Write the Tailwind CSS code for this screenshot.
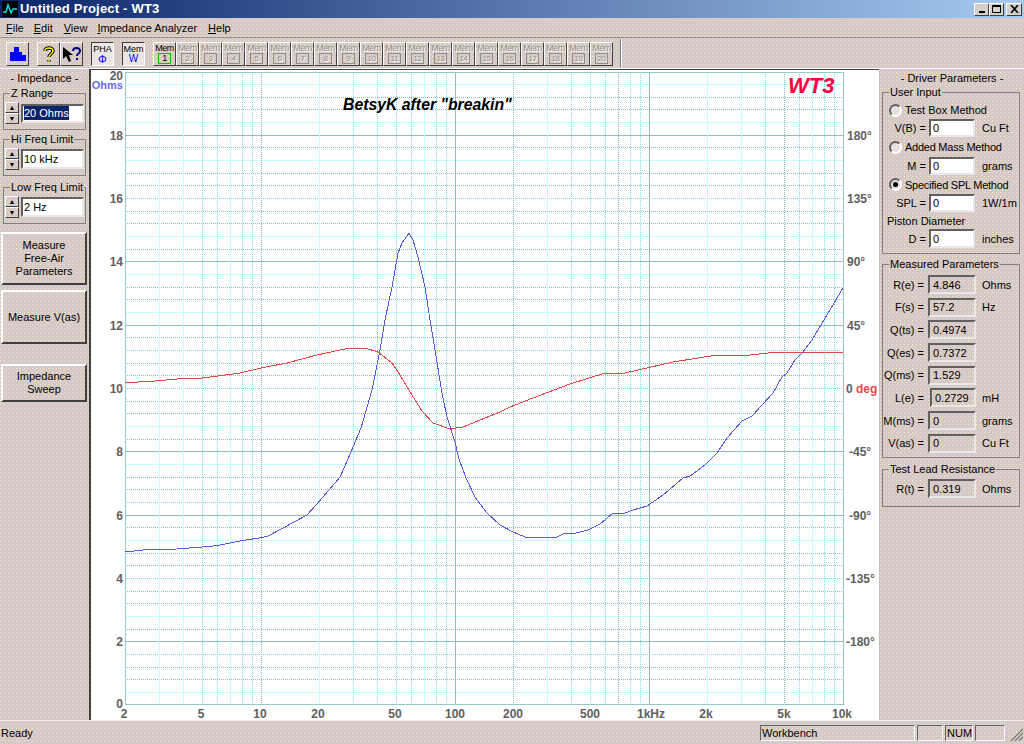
<!DOCTYPE html>
<html lang="en">

<head>
    <meta charset="UTF-8">
    <title>Untitled Project - WT3</title>
    <script src="https://cdn.jsdelivr.net/npm/@tailwindcss/browser@4"></script>
</head>

<body class="overflow-hidden">
    <div class="w-[1024px] h-[744px] flex flex-col overflow-hidden font-['Liberation_Sans',sans-serif] text-[11px] leading-[14px] text-black bg-[#d6c8c8] bg-[image:conic-gradient(from_0deg_at_1px_1px,transparent_75%,#f2f0ac_75%),conic-gradient(from_0deg_at_1px_1px,transparent_75%,#dcdcd4_75%)] bg-[length:4px_4px] bg-[position:0_0,2px_2px]">

        <!-- title bar -->
        <div class="h-[18px] flex items-center bg-[linear-gradient(90deg,#0a246a,#a6caf0)]">
            <svg class="ml-[2px] w-[16px] h-[16px]" viewBox="0 0 16 16">
                <rect width="16" height="16" fill="#000" />
                <path d="M1 11 L4 11 L6 4 L9 12 L11 8 L15 8" fill="none" stroke="#00e0e0" stroke-width="1.5" />
            </svg>
            <span class="ml-[2px] text-white font-bold text-[13px] tracking-[0.2px]">Untitled Project - WT3</span>
            <div class="ml-auto mr-[2px] flex">
                <div class="w-[15px] h-[13px] flex items-end justify-center pb-[2px] border border-t-white border-l-white border-r-[#404040] border-b-[#404040] bg-[#d4d0c8]">
                    <div class="w-[6px] h-[2px] bg-black"></div>
                </div>
                <div class="w-[15px] h-[13px] flex items-center justify-center border border-t-white border-l-white border-r-[#404040] border-b-[#404040] bg-[#d4d0c8]">
                    <div class="w-[9px] h-[8px] border border-black border-t-2"></div>
                </div>
                <div class="ml-[2px] w-[16px] h-[13px] flex items-center justify-center border border-t-white border-l-white border-r-[#404040] border-b-[#404040] bg-[#d4d0c8]">
                    <svg class="w-[9px] h-[8px]" viewBox="0 0 9 8"><path d="M1 0 L8 8 M8 0 L1 8" stroke="#000" stroke-width="1.6" /></svg>
                </div>
            </div>
        </div>

        <!-- menu -->
        <div class="h-[19px] flex items-center text-[11px]">
            <span class="ml-[6px]"><u>F</u>ile</span>
            <span class="ml-[10px]"><u>E</u>dit</span>
            <span class="ml-[11px]"><u>V</u>iew</span>
            <span class="ml-[10px]"><u>I</u>mpedance Analyzer</span>
            <span class="ml-[11px]"><u>H</u>elp</span>
        </div>

        <!-- toolbar -->
        <div class="h-[32px] flex items-start pt-[4px] border-t border-t-[#909090] border-b border-b-white">
            <div class="ml-[6px] w-[23px] h-[24px] flex items-center justify-center border border-t-white border-l-white border-r-[#404040] border-b-[#404040]">
                <svg class="w-[16px] h-[14px]" viewBox="0 0 16 14"><path d="M0 14 V5 H4 V0 H9 V5 H12 V8 H16 V14 Z" fill="#0000ff" /></svg>
            </div>
            <div class="ml-[8px] w-[23px] h-[24px] flex items-center justify-center border border-t-white border-l-white border-r-[#404040] border-b-[#404040]">
                <svg class="w-[12px] h-[17px]" viewBox="0 0 12 17">
                    <path d="M2 5 C2 1 10 1 10 5 C10 8 6 8 6 11 M6 14 V15.5" fill="none" stroke="#000" stroke-width="3.4" />
                    <path d="M2 5 C2 1 10 1 10 5 C10 8 6 8 6 11 M6 14 V15.5" fill="none" stroke="#ffff00" stroke-width="1.4" />
                </svg>
            </div>
            <div class="w-[23px] h-[24px] flex items-center justify-center border border-t-white border-l-white border-r-[#404040] border-b-[#404040]">
                <svg class="w-[20px] h-[17px]" viewBox="0 0 20 17">
                    <path d="M1 1 L1 13 L4 10 L7 16 L9 15 L7 9 L11 9 Z" fill="#000" />
                    <path d="M11 5 C11 1 18 1 18 5 C18 8 15 7 15 10 M15 12 V14" fill="none" stroke="#000080" stroke-width="2" />
                </svg>
            </div>
            <div class="ml-[8px] w-[23px] h-[24px] flex flex-col items-center border border-t-[#404040] border-l-[#404040] border-r-white border-b-white bg-white/50 text-[9px] leading-[10px] pt-[1px]">
                <span>PHA</span><span class="text-[#0000ff] text-[11px] leading-[10px]">Φ</span>
            </div>
            <div class="ml-[8px] w-[23px] h-[24px] flex flex-col items-center border border-t-[#404040] border-l-[#404040] border-r-white border-b-white bg-white/50 text-[9px] leading-[10px] pt-[1px]">
                <span>Mem</span><span class="text-[#0000ff] text-[10px] leading-[10px]">W</span>
            </div>
            <div id="mems" class="ml-[8px] flex"></div>
            <div class="ml-[7px] w-[2px] h-[28px] -mt-[3px] border-l border-l-[#808080] border-r border-r-white"></div>
        </div>

        <div class="flex flex-1 min-h-0">
            <!-- left panel -->
            <div class="w-[91px] flex flex-col border-r-2 border-r-[#404040]">
                <div class="h-[17px] flex items-center justify-center">- Impedance -</div>
                <fieldset class="ml-[3px] w-[83px] h-[43px] mt-[1px] border border-[#808080]">
                    <legend class="ml-[6px] px-[1px] leading-[13px]">Z Range</legend>
                    <div class="flex items-center gap-[2px] pl-[1px] pt-[2px]">
                        <div class="w-[14px] flex flex-col">
                            <div class="h-[11px] flex items-center justify-center text-[7px] leading-none border border-t-white border-l-white border-b-[#404040] border-r-[#404040]">▲</div>
                            <div class="h-[11px] flex items-center justify-center text-[7px] leading-none border border-t-white border-l-white border-b-[#404040] border-r-[#404040]">▼</div>
                        </div>
                        <div class="w-[63px] h-[19px] flex items-center bg-white border-2 border-t-[#606060] border-l-[#606060] border-r-[#e8e8e8] border-b-[#e8e8e8] pl-[1px]"><span class="bg-[#0a246a] text-white">20 Ohms</span></div>
                    </div>
                </fieldset>
                <fieldset class="ml-[3px] w-[83px] h-[43px] mt-[3px] border border-[#808080]">
                    <legend class="ml-[6px] px-[1px] leading-[13px]">Hi Freq Limit</legend>
                    <div class="flex items-center gap-[2px] pl-[1px] pt-[2px]">
                        <div class="w-[14px] flex flex-col">
                            <div class="h-[11px] flex items-center justify-center text-[7px] leading-none border border-t-white border-l-white border-b-[#404040] border-r-[#404040]">▲</div>
                            <div class="h-[11px] flex items-center justify-center text-[7px] leading-none border border-t-white border-l-white border-b-[#404040] border-r-[#404040]">▼</div>
                        </div>
                        <div class="w-[63px] h-[20px] flex items-center bg-white border-2 border-t-[#606060] border-l-[#606060] border-r-[#e8e8e8] border-b-[#e8e8e8] pl-[1px]">10 kHz</div>
                    </div>
                </fieldset>
                <fieldset class="ml-[3px] w-[83px] h-[43px] mt-[5px] border border-[#808080]">
                    <legend class="ml-[6px] px-[1px] leading-[13px]">Low Freq Limit</legend>
                    <div class="flex items-center gap-[2px] pl-[1px] pt-[2px]">
                        <div class="w-[14px] flex flex-col">
                            <div class="h-[11px] flex items-center justify-center text-[7px] leading-none border border-t-white border-l-white border-b-[#404040] border-r-[#404040]">▲</div>
                            <div class="h-[11px] flex items-center justify-center text-[7px] leading-none border border-t-white border-l-white border-b-[#404040] border-r-[#404040]">▼</div>
                        </div>
                        <div class="w-[63px] h-[20px] flex items-center bg-white border-2 border-t-[#606060] border-l-[#606060] border-r-[#e8e8e8] border-b-[#e8e8e8] pl-[1px]">2 Hz</div>
                    </div>
                </fieldset>
                <div class="mt-[8px] ml-[1px] w-[86px] h-[53px] flex items-center justify-center text-center border-2 border-t-white border-l-white border-r-[#404040] border-b-[#404040] leading-[13px]">Measure<br>Free-Air<br>Parameters</div>
                <div class="mt-[5px] ml-[1px] w-[86px] h-[54px] flex items-center justify-center text-center border-2 border-t-white border-l-white border-r-[#404040] border-b-[#404040]">Measure V(as)</div>
                <div class="mt-[20px] ml-[1px] w-[86px] h-[38px] flex items-center justify-center text-center border-2 border-t-white border-l-white border-r-[#404040] border-b-[#404040] leading-[13px]">Impedance<br>Sweep</div>
            </div>

            <!-- chart -->
            <svg class="w-[789px] h-[651px] shrink-0 bg-white" viewBox="91 69 789 651" font-family="Liberation Sans" font-size="12" font-weight="bold" fill="#606060">
                <g id="grid" shape-rendering="crispEdges"></g>
                <line x1="91" y1="69.5" x2="880" y2="69.5" stroke="#404040" shape-rendering="crispEdges" />
                <line x1="879.5" y1="69" x2="879.5" y2="720" stroke="#c0c0c0" shape-rendering="crispEdges" />
                <polyline fill="none" stroke="#e04848" stroke-width="1" shape-rendering="crispEdges" points="125,383 138,382 155,381 177,379 202,378 218,376 240,373 261,368 287,363 317,355 340,350 350,348 365,348 378,352 392,363 400,375 410,392 422,411 433,423 450,429 463,427 480,420 500,412 510,407 533,398 570,384 605,373 625,373 673,362 717,355 750,355 777,352 787,353 810,352 843,352" />
                <polyline fill="none" stroke="#5858d8" stroke-width="1" shape-rendering="crispEdges" points="125,552 143,550 177,549 202,547 218,545.5 240,541 262,537.5 268,536 283,528 307,515 317,504 329,490 340,477 348,459 361,428 372,390 380,350 385,320 392,287 398,253 402,243 409,233 413,240 418,257 425,287 430,320 435,350 442,393 447,417 455,442 459,459 466,478 475,497 487,513 500,525 513,532 525,537 548,538 557,537 565,533 572,534 588,530 600,524 613,513 625,513 633,510 647,506 663,495 683,478 690,476 705,465 717,453 727,438 742,421 752,416 773,393 782,377 787,373 795,360 802,353 812,340 843,288" />

                <!-- impedance axis -->
                <g text-anchor="end">
                    <text x="123" y="80">20</text>
                    <text x="123" y="89" font-size="11" fill="#6a6ae0">Ohms</text>
                    <text x="123" y="140">18</text>
                    <text x="123" y="203">16</text>
                    <text x="123" y="266">14</text>
                    <text x="123" y="330">12</text>
                    <text x="123" y="393">10</text>
                    <text x="123" y="456">8</text>
                    <text x="123" y="520">6</text>
                    <text x="123" y="583">4</text>
                    <text x="123" y="646">2</text>
                    <text x="123" y="708">0</text>
                </g>

                <!-- phase axis -->
                <text x="847" y="140">180°</text>
                <text x="847" y="203">135°</text>
                <text x="847" y="266">90°</text>
                <text x="847" y="330">45°</text>
                <text x="846" y="393">0 <tspan fill="#f04848">deg</tspan></text>
                <text x="849" y="456">-45°</text>
                <text x="849" y="520">-90°</text>
                <text x="846" y="583">-135°</text>
                <text x="846" y="646">-180°</text>

                <!-- frequency axis -->
                <g text-anchor="middle">
                    <text x="124" y="718">2</text>
                    <text x="201" y="718">5</text>
                    <text x="260" y="718">10</text>
                    <text x="318" y="718">20</text>
                    <text x="395" y="718">50</text>
                    <text x="455" y="718">100</text>
                    <text x="513" y="718">200</text>
                    <text x="590" y="718">500</text>
                    <text x="651" y="718">1kHz</text>
                    <text x="706" y="718">2k</text>
                    <text x="784" y="718">5k</text>
                    <text x="842" y="718">10k</text>
                </g>

                <text x="343" y="110" font-size="15.8" font-style="italic" fill="#000">BetsyK after "breakin"</text>
                <text x="788" y="93" font-size="22" font-style="italic" font-weight="900" fill="#ff0040">WT3</text>
            </svg>

            <!-- right panel -->
            <div class="flex-1 flex flex-col">
                <div class="h-[17px] flex items-center justify-center">- Driver Parameters -</div>
                <fieldset class="ml-[2px] w-[138px] h-[168px] border border-[#808080]">
                    <legend class="ml-[6px] px-[1px] leading-[13px]">User Input</legend>
                    <div class="pt-[2px]">
                        <div class="h-[18px] flex items-center pl-[6px] gap-[3px]">
                            <div class="w-[13px] h-[13px] rounded-full border-2 border-t-[#606060] border-l-[#606060] border-r-white border-b-white bg-white/40"></div><span>Test Box Method</span>
                        </div>
                        <div class="h-[18px] flex items-center">
                            <span class="w-[43px] text-right">V(B) =</span>
                            <div class="ml-[3px] w-[46px] h-[18px] flex items-center pl-[2px] bg-white border-2 border-t-[#606060] border-l-[#606060] border-r-[#e8e8e8] border-b-[#e8e8e8]">0</div>
                            <span class="ml-[7px]">Cu Ft</span>
                        </div>
                        <div class="h-[20px] flex items-center pl-[6px] gap-[3px]">
                            <div class="w-[13px] h-[13px] rounded-full border-2 border-t-[#606060] border-l-[#606060] border-r-white border-b-white bg-white/40"></div><span class="tracking-[-0.25px]">Added Mass Method</span>
                        </div>
                        <div class="h-[18px] flex items-center">
                            <span class="w-[43px] text-right">M =</span>
                            <div class="ml-[3px] w-[46px] h-[18px] flex items-center pl-[2px] bg-white border-2 border-t-[#606060] border-l-[#606060] border-r-[#e8e8e8] border-b-[#e8e8e8]">0</div>
                            <span class="ml-[7px]">grams</span>
                        </div>
                        <div class="h-[19px] flex items-center pl-[6px] gap-[3px]">
                            <div class="w-[13px] h-[13px] rounded-full flex items-center justify-center border-2 border-t-[#606060] border-l-[#606060] border-r-white border-b-white bg-white/40">
                                <div class="w-[5px] h-[5px] rounded-full bg-black"></div>
                            </div><span class="tracking-[-0.25px]">Specified SPL Method</span>
                        </div>
                        <div class="h-[18px] flex items-center">
                            <span class="w-[43px] text-right">SPL =</span>
                            <div class="ml-[3px] w-[46px] h-[18px] flex items-center pl-[2px] bg-white border-2 border-t-[#606060] border-l-[#606060] border-r-[#e8e8e8] border-b-[#e8e8e8]">0</div>
                            <span class="ml-[7px]">1W/1m</span>
                        </div>
                        <div class="h-[17px] flex items-center pl-[4px]">Piston Diameter</div>
                        <div class="h-[19px] flex items-center">
                            <span class="w-[43px] text-right">D =</span>
                            <div class="ml-[3px] w-[46px] h-[19px] flex items-center pl-[2px] bg-white border-2 border-t-[#606060] border-l-[#606060] border-r-[#e8e8e8] border-b-[#e8e8e8]">0</div>
                            <span class="ml-[7px]">inches</span>
                        </div>
                    </div>
                </fieldset>
                <fieldset class="ml-[2px] mt-[4px] w-[138px] h-[200px] border border-[#808080]">
                    <legend class="ml-[6px] px-[1px] leading-[13px]">Measured Parameters</legend>
                    <div class="pt-[4px] flex flex-col gap-[3.7px]">
                        <div class="h-[19px] flex items-center"><span class="w-[41px] text-right">R(e) =</span><div class="ml-[4px] w-[48px] h-[19px] flex items-center pl-[3px] border-2 border-t-[#606060] border-l-[#606060] border-r-[#e8e8e8] border-b-[#e8e8e8]">4.846</div><span class="ml-[6px]">Ohms</span></div>
                        <div class="h-[19px] flex items-center"><span class="w-[41px] text-right">F(s) =</span><div class="ml-[4px] w-[48px] h-[19px] flex items-center pl-[3px] border-2 border-t-[#606060] border-l-[#606060] border-r-[#e8e8e8] border-b-[#e8e8e8]">57.2</div><span class="ml-[6px]">Hz</span></div>
                        <div class="h-[19px] flex items-center"><span class="w-[41px] text-right">Q(ts) =</span><div class="ml-[4px] w-[48px] h-[19px] flex items-center pl-[3px] border-2 border-t-[#606060] border-l-[#606060] border-r-[#e8e8e8] border-b-[#e8e8e8]">0.4974</div></div>
                        <div class="h-[19px] flex items-center"><span class="w-[41px] text-right">Q(es) =</span><div class="ml-[4px] w-[48px] h-[19px] flex items-center pl-[3px] border-2 border-t-[#606060] border-l-[#606060] border-r-[#e8e8e8] border-b-[#e8e8e8]">0.7372</div></div>
                        <div class="h-[19px] flex items-center"><span class="w-[41px] text-right whitespace-nowrap">Q(ms) =</span><div class="ml-[4px] w-[48px] h-[19px] flex items-center pl-[3px] border-2 border-t-[#606060] border-l-[#606060] border-r-[#e8e8e8] border-b-[#e8e8e8]">1.529</div></div>
                        <div class="h-[19px] flex items-center"><span class="w-[41px] text-right">L(e) =</span><div class="ml-[6px] w-[46px] h-[19px] flex items-center pl-[3px] border-2 border-t-[#606060] border-l-[#606060] border-r-[#e8e8e8] border-b-[#e8e8e8]">0.2729</div><span class="ml-[6px]">mH</span></div>
                        <div class="h-[19px] flex items-center"><span class="w-[41px] text-right whitespace-nowrap">M(ms) =</span><div class="ml-[4px] w-[48px] h-[19px] flex items-center pl-[3px] border-2 border-t-[#606060] border-l-[#606060] border-r-[#e8e8e8] border-b-[#e8e8e8]">0</div><span class="ml-[6px]">grams</span></div>
                        <div class="h-[19px] flex items-center"><span class="w-[41px] text-right">V(as) =</span><div class="ml-[4px] w-[48px] h-[19px] flex items-center pl-[3px] border-2 border-t-[#606060] border-l-[#606060] border-r-[#e8e8e8] border-b-[#e8e8e8]">0</div><span class="ml-[6px]">Cu Ft</span></div>
                    </div>
                </fieldset>
                <fieldset class="ml-[2px] mt-[5px] w-[138px] h-[44px] border border-[#808080]">
                    <legend class="ml-[6px] px-[1px] leading-[13px]">Test Lead Resistance</legend>
                    <div class="pt-[3px]">
                        <div class="h-[19px] flex items-center"><span class="w-[41px] text-right">R(t) =</span><div class="ml-[4px] w-[48px] h-[19px] flex items-center pl-[3px] border-2 border-t-[#606060] border-l-[#606060] border-r-[#e8e8e8] border-b-[#e8e8e8]">0.319</div><span class="ml-[6px]">Ohms</span></div>
                    </div>
                </fieldset>
            </div>
        </div>

        <!-- status bar -->
        <div class="h-[24px] flex items-center border-t border-t-white/70">
            <span class="ml-[1px]">Ready</span>
            <div class="ml-auto flex items-center gap-[2px]">
                <div class="w-[155px] h-[16px] flex items-center pl-[1px] border border-t-[#606060] border-l-[#606060] border-r-white border-b-white">Workbench</div>
                <div class="w-[26px] h-[16px] border border-t-[#606060] border-l-[#606060] border-r-white border-b-white"></div>
                <div class="w-[28px] h-[16px] flex items-center pl-[1px] border border-t-[#606060] border-l-[#606060] border-r-white border-b-white">NUM</div>
                <div class="w-[30px] h-[16px] border border-t-[#606060] border-l-[#606060] border-r-white border-b-white"></div>
                <svg class="ml-[3px] mr-[1px] w-[13px] h-[13px] self-end" viewBox="0 0 13 13">
                    <path d="M13 1 L1 13 M13 5 L5 13 M13 9 L9 13" stroke="#707070" stroke-width="1.2" />
                </svg>
            </div>
        </div>
    </div>

    <script>
        // memory buttons 1..20
        const mems = document.getElementById("mems");
        let html = `<div class="w-[23px] h-[24px] flex flex-col items-center border border-t-white border-l-white border-r-[#404040] border-b-[#404040] text-[9px] tracking-[-0.5px] leading-[10px]">
            <span>Mem</span><span class="w-[13px] h-[11px] flex items-center justify-center border border-[#00c000] text-[9px] leading-none">1</span></div>`;
        for (let i = 2; i <= 20; i++) {
            html += `<div class="w-[23px] h-[24px] flex flex-col items-center border border-t-white border-l-white border-r-[#404040] border-b-[#404040] text-[9px] tracking-[-0.5px] leading-[10px] text-[#908c88] [text-shadow:1px_1px_0_#fff]">
                <span>Mem</span><span class="min-w-[13px] h-[11px] flex items-center justify-center border border-[#908c88] text-[8px] leading-none tracking-tighter">${i}</span></div>`;
        }
        mems.innerHTML = html;

        // chart grid: 0.4 ohm rows, log frequency columns
        const SOLID = `stroke="#c4ffff"`;
        const DOT = `stroke="#88bcbc" stroke-dasharray="1 1"`;
        const CYAN = `stroke="#78dcdc" stroke-dasharray="1 1"`;
        const GRAY = `stroke="#90bcbc"`;
        const rows = { 1: SOLID, 7: SOLID, 13: SOLID, 19: SOLID, 22: SOLID, 31: SOLID, 34: SOLID, 37: SOLID, 43: SOLID, 46: SOLID, 49: SOLID,
            4: CYAN, 10: CYAN, 16: CYAN, 25: CYAN, 28: CYAN, 40: CYAN,
            5: GRAY, 15: GRAY, 20: GRAY, 30: GRAY, 35: GRAY, 45: GRAY };
        let grid = "";
        for (let i = 1; i < 50; i++) {
            const y = Math.floor(705 - i * 12.66) + 0.5;
            grid += `<line x1="125" x2="843" y1="${y}" y2="${y}" ${rows[i] || DOT} />`;
        }
        const cols = [[3, SOLID], [4, SOLID], [5, CYAN], [6, CYAN], [7, SOLID], [8, CYAN], [9, CYAN], [10, DOT],
            [20, SOLID], [30, CYAN], [40, CYAN], [50, CYAN], [60, CYAN], [70, SOLID], [80, CYAN], [90, CYAN], [100, GRAY],
            [200, DOT], [300, SOLID], [400, CYAN], [500, CYAN], [600, CYAN], [700, DOT], [800, CYAN], [900, CYAN], [1000, GRAY],
            [2000, SOLID], [3000, SOLID], [4000, CYAN], [5000, DOT], [6000, CYAN], [7000, SOLID], [8000, CYAN], [9000, CYAN]];
        cols.forEach(([f, style]) => {
            const x = Math.floor(261 + 194 * Math.log10(f / 10)) + 0.5;
            grid += `<line y1="72" y2="705" x1="${x}" x2="${x}" ${style} />`;
        });
        // frame
        grid += `<rect x="125.5" y="72.5" width="718" height="632" fill="none" stroke="#98c8c8" />`;
        document.getElementById("grid").innerHTML = grid;
    </script>
</body>

</html>
